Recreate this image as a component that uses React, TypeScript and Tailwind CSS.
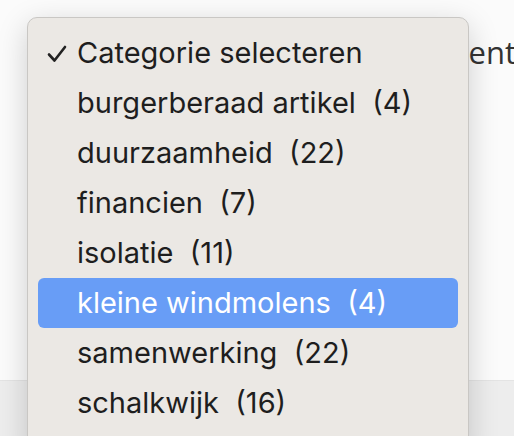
import React from "react";

const items: { label: string; count?: number; checked?: boolean; active?: boolean }[] = [
  { label: "Categorie selecteren", checked: true },
  { label: "burgerberaad artikel", count: 4 },
  { label: "duurzaamheid", count: 22 },
  { label: "financien", count: 7 },
  { label: "isolatie", count: 11 },
  { label: "kleine windmolens", count: 4, active: true },
  { label: "samenwerking", count: 22 },
  { label: "schalkwijk", count: 16 },
];

export default function App() {
  return (
    <div
      className="relative w-[514px] h-[436px] overflow-hidden bg-[#fbfbfb] flex flex-col"
      style={{ fontFamily: "Inter, 'Noto Sans', sans-serif" }}
    >
      <div className="h-[380px] flex items-start justify-end pt-[32px]">
        <span
          className="text-[31px] leading-[40px] text-[#333] whitespace-pre mr-[-2px]"
          style={{ fontFamily: "'Open Sans', sans-serif" }}
        >
          Document
        </span>
      </div>
      <div className="flex-1 bg-[#ededed] border-t border-[#e4e4e4]" />

      <div className="absolute left-[27px] top-[17px] w-[442px] h-[440px] rounded-[10px] border border-[#c9c7c4] bg-[#ebe8e4] shadow-[0_8px_30px_rgba(0,0,0,0.18)] px-[10px] pt-[10px]">
        {items.map((it) => (
          <div
            key={it.label}
            className={
              "h-[50px] flex items-center rounded-[6px] pl-[9px] text-[29px] whitespace-pre " +
              (it.active ? "bg-[#689df6] text-white" : "text-[#1e1e1e]")
            }
          >
            <span className="w-[30px] flex items-center">
              {it.checked ? (
                <svg width="20" height="18" viewBox="0 0 20 18" className="mt-[2px]">
                  <path d="M2 9.5 L7.5 15.5 L18 2" fill="none" stroke="#222" strokeWidth="2.6" strokeLinecap="round" strokeLinejoin="round" />
                </svg>
              ) : null}
            </span>
            <span>
              {it.label}
              {it.count !== undefined ? `  (${it.count})` : ""}
            </span>
          </div>
        ))}
      </div>
    </div>
  );
}
